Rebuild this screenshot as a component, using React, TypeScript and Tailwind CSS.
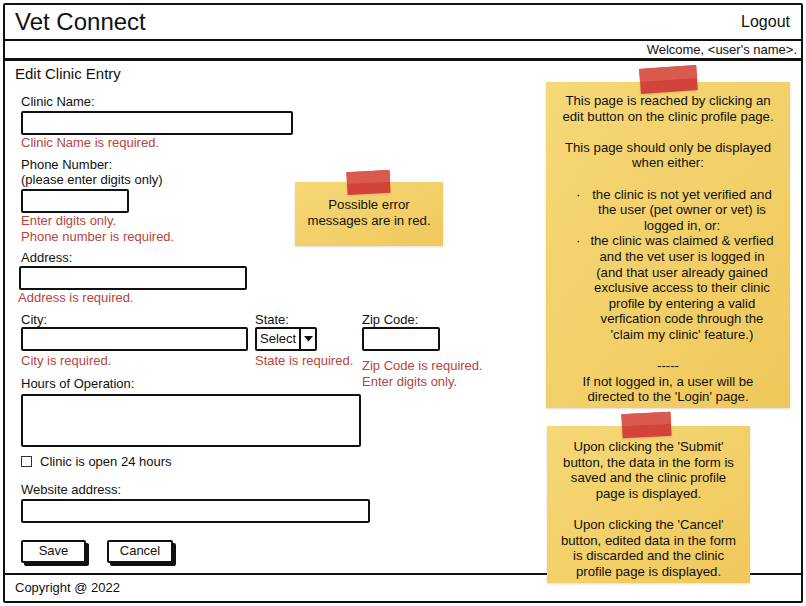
import React from "react";

const Label = ({ children }: { children: React.ReactNode }) => (
  <div className="text-[13px] leading-[16px] text-[#111]">{children}</div>
);

const Err = ({ children }: { children: React.ReactNode }) => (
  <div className="text-[13px] leading-[16px] text-[#b8443b]">{children}</div>
);

const Box = ({ w, h = "h-[24px]" }: { w: string; h?: string }) => (
  <div className={`${w} ${h} border-2 border-[#111] rounded-[2px] bg-white`} />
);

const Tape = ({ className }: { className: string }) => (
  <div className={`absolute ${className} bg-[#d2443a] shadow-sm`}>
    <div className="h-1/2 bg-[#db5a4f]" />
  </div>
);

const Note = ({
  className,
  tape,
  children,
}: {
  className: string;
  tape: string;
  children: React.ReactNode;
}) => (
  <div className={`absolute z-10 ${className}`}>
    <div className="w-full h-full bg-gradient-to-br from-[#f6d877] to-[#efc85b] shadow-[0_1px_2px_rgba(0,0,0,0.15)] flex flex-col items-center text-center text-[13.2px] leading-[15.6px] text-[#111]">
      {children}
    </div>
    <Tape className={tape} />
  </div>
);

const Button = ({ label, w }: { label: string; w: string }) => (
  <div className={`${w} h-[23px] border-2 border-[#111] rounded-[2px] bg-white shadow-[3px_3px_0_#111] flex items-center justify-center text-[13px]`}>
    {label}
  </div>
);

export default function App() {
  return (
    <div className="relative w-[806px] h-[606px] bg-white font-['Liberation_Sans',Arial,sans-serif] text-[#111] overflow-hidden">
      <div className="absolute left-[3px] top-[3px] w-[800px] h-[600px] border-2 border-[#111] rounded-[2px] flex flex-col">
        <header className="h-[36px] flex items-center justify-between pl-[10px] pr-[11px] border-b-2 border-[#111]">
          <span className="text-[24px] leading-none">Vet Connect</span>
          <span className="text-[16px] leading-none">Logout</span>
        </header>
        <div className="h-[20px] flex items-center justify-end pr-[4px] border-b-[3px] border-[#111] text-[13px]">
          Welcome, &lt;user's name&gt;.
        </div>
        <main className="flex-1 pl-[10px] pt-[4px]">
          <h1 className="text-[15px] leading-[18px]">Edit Clinic Entry</h1>
          <div className="pl-[6px] pt-[11px] flex flex-col">
            <Label>Clinic Name:</Label>
            <div className="mt-[1px]"><Box w="w-[272px]" /></div>
            <Err>Clinic Name is required.</Err>
            <div className="mt-[6px] text-[13px] leading-[15px]">
              Phone Number:
              <br />
              (please enter digits only)
            </div>
            <div className="mt-[2px]"><Box w="w-[108px]" /></div>
            <Err>Enter digits only.</Err>
            <Err>Phone number is required.</Err>
            <div className="mt-[5px]"><Label>Address:</Label></div>
            <div className="-ml-[2px]"><Box w="w-[228px]" /></div>
            <div className="-ml-[3px]"><Err>Address is required.</Err></div>

            <div className="mt-[6px] h-[64px] flex items-start">
              <div className="w-[234px] flex flex-col">
                <div className="text-[13px] leading-[15px]">City:</div>
                <Box w="w-[227px]" />
                <div className="mt-[2px]"><Err>City is required.</Err></div>
              </div>
              <div className="w-[107px] flex flex-col">
                <div className="text-[13px] leading-[15px]">State:</div>
                <div className="w-[62px] h-[24px] border-2 border-[#111] rounded-[2px] flex items-center text-[13px]">
                  <span className="flex-1 pl-[3px]">Select</span>
                  <span className="w-[16px] h-full border-l-2 border-[#111] flex items-center justify-center">
                    <svg width="9" height="6" viewBox="0 0 9 6">
                      <path d="M0 0 L9 0 L4.5 5.5 Z" fill="#111" />
                    </svg>
                  </span>
                </div>
                <div className="mt-[2px] whitespace-nowrap"><Err>State is required.</Err></div>
              </div>
              <div className="flex flex-col">
                <div className="text-[13px] leading-[15px]">Zip Code:</div>
                <Box w="w-[78px]" />
                <div className="mt-[7px] whitespace-nowrap">
                  <Err>Zip Code is required.</Err>
                  <Err>Enter digits only.</Err>
                </div>
              </div>
            </div>

            <Label>Hours of Operation:</Label>
            <div className="mt-[2px]"><Box w="w-[340px]" h="h-[53px]" /></div>
            <div className="mt-[5px] flex items-center gap-[8px] text-[13px]">
              <div className="w-[11px] h-[11px] border border-[#333]" />
              <span>Clinic is open 24 hours</span>
            </div>
            <div className="mt-[10px]"><Label>Website address:</Label></div>
            <div className="mt-[1px]"><Box w="w-[349px]" /></div>
            <div className="mt-[17px] flex gap-[21px]">
              <Button label="Save" w="w-[65px]" />
              <Button label="Cancel" w="w-[66px]" />
            </div>
          </div>
        </main>
        <footer className="h-[28px] flex items-center pl-[10px] border-t-2 border-[#111] text-[13px]">
          Copyright @ 2022
        </footer>
      </div>

      <Note className="left-[295px] top-[182px] w-[148px] h-[64px]" tape="left-[52px] -top-[11px] w-[43px] h-[23px] -rotate-[3deg]">
        <div className="pt-[15px]">
          Possible error
          <br />
          messages are in red.
        </div>
      </Note>

      <Note className="left-[546px] top-[82px] w-[244px] h-[326px]" tape="left-[94px] -top-[15px] w-[57px] h-[25px] -rotate-[4deg]">
        <div className="pt-[11px] w-full">
          This page is reached by clicking an
          <br />
          edit button on the clinic profile page.
          <br />
          <br />
          This page should only be displayed
          <br />
          when either:
          <br />
          <br />
          <div className="flex pl-[30px] pr-[12px]">
            <span className="w-[10px] text-left">·</span>
            <span className="flex-1">
              the clinic is not yet verified and
              <br />
              the user (pet owner or vet) is
              <br />
              logged in, or:
            </span>
          </div>
          <div className="flex pl-[30px] pr-[12px]">
            <span className="w-[10px] text-left">·</span>
            <span className="flex-1">
              the clinic was claimed &amp; verfied
              <br />
              and the vet user is logged in
              <br />
              (and that user already gained
              <br />
              exclusive access to their clinic
              <br />
              profile by entering a valid
              <br />
              verfication code through the
              <br />
              'claim my clinic' feature.)
            </span>
          </div>
          <br />
          -----
          <br />
          If not logged in, a user will be
          <br />
          directed to the 'Login' page.
        </div>
      </Note>

      <Note className="left-[547px] top-[426px] w-[203px] h-[157px]" tape="left-[75px] -top-[13px] w-[49px] h-[24px] -rotate-[3deg]">
        <div className="pt-[13px]">
          Upon clicking the 'Submit'
          <br />
          button, the data in the form is
          <br />
          saved and the clinic profile
          <br />
          page is displayed.
          <br />
          <br />
          Upon clicking the 'Cancel'
          <br />
          button, edited data in the form
          <br />
          is discarded and the clinic
          <br />
          profile page is displayed.
        </div>
      </Note>
    </div>
  );
}
